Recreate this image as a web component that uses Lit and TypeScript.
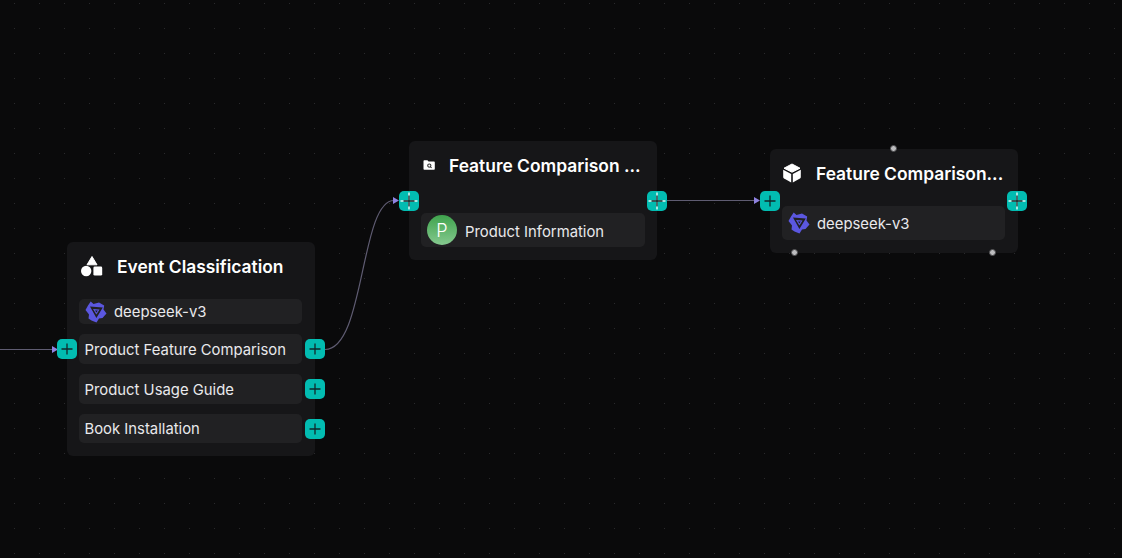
import { LitElement, html, css, svg } from "lit";
import { customElement } from "lit/decorators.js";

const shapes = html`<svg class="ico" width="24" height="24" viewBox="0 0 24 24"><path d="M12 2.5 17 10.8H7Z" fill="#fff" stroke="#fff" stroke-linejoin="round"/><circle cx="6.2" cy="17" r="5.2" fill="#fff"/><rect x="13.4" y="12.6" width="8.8" height="9" rx="1.4" fill="#fff"/></svg>`;

const folder = html`<svg class="ico" width="12" height="10" viewBox="0 0 12 10"><path d="M0.5 1.2Q.5 .3 1.3 .3H4.4L5.6 1.6H11Q11.8 1.6 11.8 2.4V9Q11.8 9.8 11 9.8H1.3Q.5 9.8 .5 9Z" fill="#fff"/><circle cx="6.3" cy="5.6" r="1.6" fill="none" stroke="#333" stroke-width="1.1"/><path d="M7.4 6.8 8.6 7.8" stroke="#333" stroke-width="1.1"/></svg>`;

const cube = html`<svg class="ico" width="20" height="20" viewBox="0 0 20 20"><path d="M10 1 18 5.2 10 9.2 2 5.2Z" fill="#fff" stroke="#fff" stroke-linejoin="round"/><path d="M1.2 6.8 9.2 11V19.4L2.1 15.6Q1.2 15.1 1.2 14.1Z" fill="#fff"/><path d="M18.8 6.8 10.8 11V19.4L17.9 15.6Q18.8 15.1 18.8 14.1Z" fill="#fff"/></svg>`;

const model = html`<svg class="ico" width="22" height="22" viewBox="0 0 22 22">
  <path fill-rule="evenodd" fill="#5b57e0" d="M5.7 .5 8.5 3 14 1.6 19.2 4.5 18.5 8.5 21.5 12.5 17.5 17 14 17.5 11.5 21.5 6.5 19.5 3.5 17.5 4 13.5 .5 9 3 4.5ZM5 5.6 17.8 6.6 11.4 17Z"/>
  <path d="M8 8 14.6 8.4 11.4 13.4Z" fill="#5b57e0"/><path d="M10 9.4H12.8L11.4 11.6Z" fill="#1a1a2a"/></svg>`;

const plus = (cross = false) => html`<svg width="20" height="20" viewBox="0 0 20 20" class="plus">
  ${cross ? svg`<path d="M1.5 10H18.5M10 1.5V18.5" stroke="#dff5f4" stroke-width="1.5"/>` : ""}
  <path d="M4.5 10H15.5M10 4.5V15.5" stroke="#12282b" stroke-width="1.3"/></svg>`;

@customElement("app-root")
export class AppRoot extends LitElement {
  static styles = css`
    :host { display: block; width: 1122px; height: 558px; overflow: hidden; position: relative;
      background-color: #0a0a0b;
      background-image: radial-gradient(circle at center, #2a2a2c 0, #2a2a2c 0.8px, transparent 1px);
      background-size: 25px 25px; background-position: 2px -9px;
      font-family: Inter, "Liberation Sans", sans-serif; color: #e9e9ec; }
    .edges { position: absolute; inset: 0; }
    .node { position: absolute; width: 248px; box-sizing: border-box; background: #161618; border-radius: 6px;
      padding: 12px 13px 12px 12px; display: flex; flex-direction: column; }
    .n1 { left: 67px; top: 242px; height: 214px; gap: 10px; }
    .n2 { left: 409px; top: 141px; height: 119px; padding-right: 12px; }
    .n3 { left: 770px; top: 149px; height: 104px; }
    .head { display: flex; align-items: center; color: #fff; font-weight: 600; font-size: 17.4px; min-width: 0; }
    .n1 .head { height: 24px; margin: 0 0 11px 1px; gap: 13px; }
    .n2 .head { height: 24px; margin: 0 0 36px 2px; gap: 14px; }
    .n3 .head { height: 24px; margin: 0 0 21px 0; gap: 14px; }
    .title { white-space: nowrap; }
    .row { position: relative; display: flex; align-items: center; background: #212123; border-radius: 5px;
      font-size: 14.85px; box-sizing: border-box; padding: 0 5px; flex: none; }
    .model { height: 25px; gap: 7px; padding-left: 6px; }
    .item { height: 30px; padding-left: 5.5px; }
    .item span { padding-top: 1px; }
    .item.last { height: 29px; }
    .tall { height: 34px; gap: 7px; padding-left: 6px; }
    .tall span { padding-top: 2px; }
    .tall span.label-low { padding-top: 3px; padding-left: 1px; }
    .avatar { width: 30px; height: 30px; border-radius: 50%; flex: none; background: linear-gradient(#3fa34d, #85c98f);
      display: flex; align-items: center; justify-content: center; color: #fff; font-size: 18px; font-weight: 300; }
    .h { position: absolute; width: 20px; height: 20px; background: #02bcb1; border-radius: 5px; }
    .plus { display: block; }
    .h.r { left: 226px; top: 5px; }
    .h.l { left: -22px; top: 5px; }
    .ico { flex: none; display: block; }
    .dot { position: absolute; width: 7px; height: 7px; border-radius: 50%; background: #bdbdbf; border: 1px solid #4a4a4c; box-sizing: border-box; }
  `;

  render() {
    return html`
      <svg class="edges" width="1122" height="558" viewBox="0 0 1122 558" fill="none">
        <path d="M0 349.5H52M325 349.5C365 349.5 360 200.5 394 200.5M667 200.5H755" stroke="#5f5c72" stroke-width="1.2"/>
        <path d="M52 346 58 349.5 52 353ZM393 197 399 200.5 393 204ZM754 197 760 200.5 754 204Z" fill="#8f82e0"/>
      </svg>
      <div class="node n1">
        <div class="head">${shapes}<span class="title">Event Classification</span></div>
        <div class="row model">${model}<span>deepseek-v3</span></div>
        <div class="row item"><span>Product Feature Comparison</span>
          <div class="h l">${plus()}</div><div class="h r">${plus()}</div></div>
        <div class="row item"><span>Product Usage Guide</span><div class="h r">${plus()}</div></div>
        <div class="row item last"><span>Book Installation</span><div class="h r">${plus()}</div></div>
      </div>
      <div class="node n2">
        <div class="head">${folder}<span class="title">Feature Comparison ...</span></div>
        <div class="row tall"><div class="avatar">P</div><span class="label-low">Product Information</span></div>
        <div class="h" style="left:-10px;top:50px">${plus(true)}</div>
        <div class="h" style="left:238px;top:50px">${plus(true)}</div>
      </div>
      <div class="node n3">
        <div class="head">${cube}<span class="title">Feature Comparison...</span></div>
        <div class="row tall">${model}<span>deepseek-v3</span></div>
        <div class="h" style="left:-10px;top:42px">${plus()}</div>
        <div class="h" style="left:237px;top:42px">${plus(true)}</div>
        <div class="dot" style="left:120px;top:-4px"></div>
        <div class="dot" style="left:21px;top:100px"></div>
        <div class="dot" style="left:219px;top:100px"></div>
      </div>
    `;
  }
}
